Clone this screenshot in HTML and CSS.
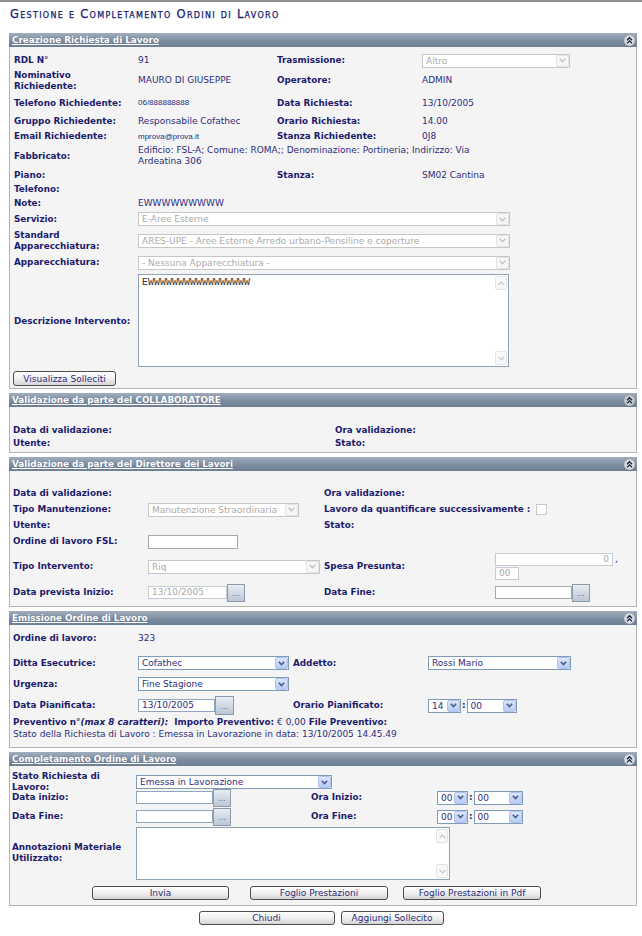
FILE: index.html
```html
<!DOCTYPE html>
<html lang="it">
<head>
<meta charset="utf-8">
<title>Gestione e Completamento Ordini di Lavoro</title>
<link rel="stylesheet" href="styles.css">
</head>
<body>
<div class="page">
  <h1 class="title">Gestione e Completamento Ordini di Lavoro</h1>

  <!-- 1 -->
  <section class="panel">
    <div class="bar"><a class="bar-title">Creazione Richiesta di Lavoro</a>
      <svg class="collapse" width="11" height="11" viewBox="0 0 11 11"><circle cx="5.5" cy="5.5" r="5.3" fill="#d7dde4"/><path d="M3 5.2 L5.5 2.7 L8 5.2 M3 8.4 L5.5 5.9 L8 8.4" fill="none" stroke="#1d2233" stroke-width="1.3"/></svg>
    </div>
    <div class="body b1">
      <div class="row h17"><span class="lbl">RDL N°</span><span class="val">91</span><span class="lbl">Trasmissione:</span>
        <div class="sel w148"><span class="txt">Altro</span><span class="arr"><svg width="7" height="5" viewBox="0 0 7 5"><path d="M0.6 0.8 L3.5 3.8 L6.4 0.8" fill="none" stroke="currentColor" stroke-width="1.3"/></svg></span></div></div>
      <div class="row h23"><span class="lbl">Nominativo<br>Richiedente:</span><span class="val">MAURO DI GIUSEPPE</span><span class="lbl">Operatore:</span><span class="val">ADMIN</span></div>
      <div class="row h22"><span class="lbl">Telefono Richiedente:</span><span class="val small up">06/888888888</span><span class="lbl">Data Richiesta:</span><span class="val">13/10/2005</span></div>
      <div class="row h14"><span class="lbl">Gruppo Richiedente:</span><span class="val">Responsabile Cofathec</span><span class="lbl">Orario Richiesta:</span><span class="val">14.00</span></div>
      <div class="row h17"><span class="lbl">Email Richiedente:</span><span class="val small">mprova@prova.it</span><span class="lbl">Stanza Richiedente:</span><span class="val">0J8</span></div>
      <div class="row h22"><span class="lbl">Fabbricato:</span><span class="val wrap span3">Edificio: FSL-A; Comune: ROMA;; Denominazione: Portineria; Indirizzo: Via<br>Ardeatina 306</span></div>
      <div class="row h16"><span class="lbl">Piano:</span><span></span><span class="lbl">Stanza:</span><span class="val">SM02 Cantina</span></div>
      <div class="row h13"><span class="lbl">Telefono:</span></div>
      <div class="row h15"><span class="lbl">Note:</span><span class="val">EWWWWWWWWW</span></div>
      <div class="row h16"><span class="lbl">Servizio:</span>
        <div class="sel w372 span3"><span class="txt">E-Aree Esterne</span><span class="arr"><svg width="7" height="5" viewBox="0 0 7 5"><path d="M0.6 0.8 L3.5 3.8 L6.4 0.8" fill="none" stroke="currentColor" stroke-width="1.3"/></svg></span></div></div>
      <div class="row h27"><span class="lbl">Standard<br>Apparecchiatura:</span>
        <div class="sel w372 span3"><span class="txt">ARES-UPE - Aree Esterne Arredo urbano-Pensiline e coperture</span><span class="arr"><svg width="7" height="5" viewBox="0 0 7 5"><path d="M0.6 0.8 L3.5 3.8 L6.4 0.8" fill="none" stroke="currentColor" stroke-width="1.3"/></svg></span></div></div>
      <div class="row h17"><span class="lbl">Apparecchiatura:</span>
        <div class="sel w372 span3"><span class="txt">- Nessuna Apparecchiatura -</span><span class="arr"><svg width="7" height="5" viewBox="0 0 7 5"><path d="M0.6 0.8 L3.5 3.8 L6.4 0.8" fill="none" stroke="currentColor" stroke-width="1.3"/></svg></span></div></div>
      <div class="row h96"><span class="lbl lbl-desc">Descrizione Intervento:</span>
        <div class="ta ta1 span3"><div class="ta-text">EWWWWWWWWWWWWWWWWW</div>
          <div class="sb"><span class="sb-btn"><svg width="7" height="5" viewBox="0 0 7 5"><path d="M0.6 4.2 L3.5 1.2 L6.4 4.2" fill="none" stroke="currentColor" stroke-width="1.2"/></svg></span><span class="sb-btn"><svg width="7" height="5" viewBox="0 0 7 5"><path d="M0.6 0.8 L3.5 3.8 L6.4 0.8" fill="none" stroke="currentColor" stroke-width="1.2"/></svg></span></div>
        </div></div>
      <div class="row h19"><button class="btn btn-sol">Visualizza Solleciti</button></div>
    </div>
  </section>

  <!-- 2 -->
  <section class="panel">
    <div class="bar"><a class="bar-title">Validazione da parte del COLLABORATORE</a>
      <svg class="collapse" width="11" height="11" viewBox="0 0 11 11"><circle cx="5.5" cy="5.5" r="5.3" fill="#c3cad3"/><path d="M3 5.2 L5.5 2.7 L8 5.2 M3 8.4 L5.5 5.9 L8 8.4" fill="none" stroke="#1d2233" stroke-width="1.3"/></svg>
    </div>
    <div class="body b2">
      <div class="row h13"><span class="lbl">Data di validazione:</span><span class="lbl">Ora validazione:</span></div>
      <div class="row h13"><span class="lbl">Utente:</span><span class="lbl">Stato:</span></div>
    </div>
  </section>

  <!-- 3 -->
  <section class="panel">
    <div class="bar"><a class="bar-title">Validazione da parte del Direttore dei Lavori</a>
      <svg class="collapse" width="11" height="11" viewBox="0 0 11 11"><circle cx="5.5" cy="5.5" r="5.3" fill="#d7dde4"/><path d="M3 5.2 L5.5 2.7 L8 5.2 M3 8.4 L5.5 5.9 L8 8.4" fill="none" stroke="#1d2233" stroke-width="1.3"/></svg>
    </div>
    <div class="body b3">
      <div class="row h14"><span class="lbl">Data di validazione:</span><span></span><span class="lbl">Ora validazione:</span></div>
      <div class="row h19"><span class="lbl">Tipo Manutenzione:</span>
        <div class="sel w151"><span class="txt">Manutenzione Straordinaria</span><span class="arr"><svg width="7" height="5" viewBox="0 0 7 5"><path d="M0.6 0.8 L3.5 3.8 L6.4 0.8" fill="none" stroke="currentColor" stroke-width="1.3"/></svg></span></div>
        <div class="grp span2"><span class="lbl">Lavoro da quantificare successivamente :</span><span class="chk"></span></div></div>
      <div class="row h13"><span class="lbl">Utente:</span><span></span><span class="lbl">Stato:</span></div>
      <div class="row h19"><span class="lbl">Ordine di lavoro FSL:</span><div class="inp w90 h14i"></div></div>
      <div class="row h31"><span class="lbl">Tipo Intervento:</span>
        <div class="sel w172"><span class="txt">Riq</span><span class="arr"><svg width="7" height="5" viewBox="0 0 7 5"><path d="M0.6 0.8 L3.5 3.8 L6.4 0.8" fill="none" stroke="currentColor" stroke-width="1.3"/></svg></span></div>
        <span class="lbl">Spesa Presunta:</span>
        <div class="spesa">
          <div class="grp"><div class="inp dis w118 right">0</div><span class="comma">,</span></div>
          <div class="inp dis w24 second">00</div>
        </div></div>
      <div class="row h21"><span class="lbl">Data prevista Inizio:</span>
        <div class="grp"><div class="inp dis w79">13/10/2005</div><span class="dots">...</span></div>
        <span class="lbl">Data Fine:</span>
        <div class="grp"><div class="inp w77"></div><span class="dots">...</span></div></div>
    </div>
  </section>

  <!-- 4 -->
  <section class="panel">
    <div class="bar"><a class="bar-title">Emissione Ordine di Lavoro</a>
      <svg class="collapse" width="11" height="11" viewBox="0 0 11 11"><circle cx="5.5" cy="5.5" r="5.3" fill="#d7dde4"/><path d="M3 5.2 L5.5 2.7 L8 5.2 M3 8.4 L5.5 5.9 L8 8.4" fill="none" stroke="#1d2233" stroke-width="1.3"/></svg>
    </div>
    <div class="body b4">
      <div class="row h13"><span class="lbl">Ordine di lavoro:</span><span class="val">323</span></div>
      <div class="row h16 mt10"><span class="lbl">Ditta Esecutrice:</span>
        <div class="sel on w151"><span class="txt">Cofathec</span><span class="arr"><svg width="7" height="5" viewBox="0 0 7 5"><path d="M0.8 0.8 L3.5 3.6 L6.2 0.8" fill="none" stroke="currentColor" stroke-width="1.6"/></svg></span></div>
        <span class="lbl">Addetto:</span>
        <div class="sel on w143"><span class="txt">Rossi Mario</span><span class="arr"><svg width="7" height="5" viewBox="0 0 7 5"><path d="M0.8 0.8 L3.5 3.6 L6.2 0.8" fill="none" stroke="currentColor" stroke-width="1.6"/></svg></span></div></div>
      <div class="row h16 mt5"><span class="lbl">Urgenza:</span>
        <div class="sel on w151"><span class="txt">Fine Stagione</span><span class="arr"><svg width="7" height="5" viewBox="0 0 7 5"><path d="M0.8 0.8 L3.5 3.6 L6.2 0.8" fill="none" stroke="currentColor" stroke-width="1.6"/></svg></span></div></div>
      <div class="row h19 mt4"><span class="lbl">Data Pianificata:</span>
        <div class="grp"><div class="inp on w77">13/10/2005</div><span class="dots dots19">...</span></div>
        <span class="lbl">Orario Pianificato:</span>
        <div class="grp">
          <div class="sel on w33"><span class="txt">14</span><span class="arr"><svg width="7" height="5" viewBox="0 0 7 5"><path d="M0.8 0.8 L3.5 3.6 L6.2 0.8" fill="none" stroke="currentColor" stroke-width="1.6"/></svg></span></div>
          <span class="colon">:</span>
          <div class="sel on w50"><span class="txt">00</span><span class="arr"><svg width="7" height="5" viewBox="0 0 7 5"><path d="M0.8 0.8 L3.5 3.6 L6.2 0.8" fill="none" stroke="currentColor" stroke-width="1.6"/></svg></span></div>
        </div></div>
      <div class="row h12 pv"><span class="lbl span-all">Preventivo n°<i>(max 8 caratteri):</i>&nbsp; Importo Preventivo: <span class="val">€ 0,00</span> File Preventivo:</span></div>
      <div class="row h12 pv"><span class="val span-all">Stato della Richiesta di Lavoro : Emessa in Lavorazione in data: 13/10/2005 14.45.49</span></div>
    </div>
  </section>

  <!-- 5 -->
  <section class="panel">
    <div class="bar"><a class="bar-title">Completamento Ordine di Lavoro</a>
      <svg class="collapse" width="11" height="11" viewBox="0 0 11 11"><circle cx="5.5" cy="5.5" r="5.3" fill="#d7dde4"/><path d="M3 5.2 L5.5 2.7 L8 5.2 M3 8.4 L5.5 5.9 L8 8.4" fill="none" stroke="#1d2233" stroke-width="1.3"/></svg>
    </div>
    <div class="body b5">
      <div class="row h17"><span class="lbl">Stato Richiesta di<br>Lavoro:</span>
        <div class="sel on w196 span3"><span class="txt">Emessa in Lavorazione</span><span class="arr"><svg width="7" height="5" viewBox="0 0 7 5"><path d="M0.8 0.8 L3.5 3.6 L6.2 0.8" fill="none" stroke="currentColor" stroke-width="1.6"/></svg></span></div></div>
      <div class="row h19"><span class="lbl">Data inizio:</span>
        <div class="grp"><div class="inp on w77"></div><span class="dots">...</span></div>
        <span class="lbl">Ora Inizio:</span>
        <div class="grp">
          <div class="sel on w31"><span class="txt">00</span><span class="arr"><svg width="7" height="5" viewBox="0 0 7 5"><path d="M0.8 0.8 L3.5 3.6 L6.2 0.8" fill="none" stroke="currentColor" stroke-width="1.6"/></svg></span></div>
          <span class="colon">:</span>
          <div class="sel on w49"><span class="txt">00</span><span class="arr"><svg width="7" height="5" viewBox="0 0 7 5"><path d="M0.8 0.8 L3.5 3.6 L6.2 0.8" fill="none" stroke="currentColor" stroke-width="1.6"/></svg></span></div>
        </div></div>
      <div class="row h19"><span class="lbl">Data Fine:</span>
        <div class="grp"><div class="inp on w77"></div><span class="dots">...</span></div>
        <span class="lbl">Ora Fine:</span>
        <div class="grp">
          <div class="sel on w31"><span class="txt">00</span><span class="arr"><svg width="7" height="5" viewBox="0 0 7 5"><path d="M0.8 0.8 L3.5 3.6 L6.2 0.8" fill="none" stroke="currentColor" stroke-width="1.6"/></svg></span></div>
          <span class="colon">:</span>
          <div class="sel on w49"><span class="txt">00</span><span class="arr"><svg width="7" height="5" viewBox="0 0 7 5"><path d="M0.8 0.8 L3.5 3.6 L6.2 0.8" fill="none" stroke="currentColor" stroke-width="1.6"/></svg></span></div>
        </div></div>
      <div class="row h54"><span class="lbl lbl-ann">Annotazioni Materiale<br>Utilizzato:</span>
        <div class="ta ta2 span3"><div class="ta-text"></div>
          <div class="sb"><span class="sb-btn"><svg width="7" height="5" viewBox="0 0 7 5"><path d="M0.6 4.2 L3.5 1.2 L6.4 4.2" fill="none" stroke="currentColor" stroke-width="1.2"/></svg></span><span class="sb-btn"><svg width="7" height="5" viewBox="0 0 7 5"><path d="M0.6 0.8 L3.5 3.8 L6.4 0.8" fill="none" stroke="currentColor" stroke-width="1.2"/></svg></span></div>
        </div></div>
      <div class="actions">
        <button class="btn w137">Invia</button>
        <button class="btn w138 ml21">Foglio Prestazioni</button>
        <button class="btn w138 ml15">Foglio Prestazioni in Pdf</button>
      </div>
    </div>
  </section>

  <div class="footer">
    <button class="btn w136">Chiudi</button>
    <button class="btn w103">Aggiungi Sollecito</button>
  </div>
</div>
</body>
</html>
```

FILE: styles.css
```css
* { box-sizing: border-box; }
html, body { margin: 0; padding: 0; background: #fff; }
body {
  font-family: "DejaVu Sans", Verdana, sans-serif;
  font-size: 9px;
  line-height: 11px;
  color: #2d2d7d;
}
.page {
  width: 642px;
  min-height: 936px;
  border-top: 2px solid #8f8f8f;
  padding: 0 5px 0 9px;
}
.title {
  margin: 0;
  height: 31px;
  padding: 7px 0 0 1px;
  font-size: 11.5px;
  line-height: 11px;
  font-weight: normal;
  font-variant: small-caps;
  letter-spacing: 1.3px;
  color: #15206e;
  -webkit-text-stroke: 0.25px #15206e;
}

/* panels */
.panel + .panel { margin-top: 4px; }
.bar {
  height: 14px;
  display: flex;
  align-items: center;
  justify-content: space-between;
  padding: 0 2px 0 3px;
  background: linear-gradient(#a1aebd, #7d8da1 55%, #6d7e92);
}
.bar-title {
  color: #fff;
  font-weight: bold;
  font-size: 8.8px;
  text-decoration: underline;
  text-shadow: 0 0 1px rgba(50, 60, 80, .5);
  white-space: nowrap;
}
.collapse { display: block; }
.body {
  background: #f4f4f4;
  border: 1px solid #b3b3b3;
  border-top: 0;
}

.row { display: grid; align-items: center; }
.b1 { padding: 5px 4px 2px 4px; }
.b1 .row { grid-template-columns: 124px 139px 145px 1fr; }
.b2 { padding: 17px 3px 2px 3px; }
.b2 .row { grid-template-columns: 322px 1fr; }
.b3 { padding: 15px 3px 3px 3px; }
.b3 .row { grid-template-columns: 135px 176px 171px 1fr; }
.b4 { padding: 7px 3px 8px 3px; }
.b4 .row { grid-template-columns: 125px 155px 135px 1fr; }
.b4 .pv { position: relative; top: 1px; }
.b5 { padding: 5px 2px 5px 2px; }
.b5 .row { grid-template-columns: 124px 175px 126px 1fr; }

.h12 { height: 12px; }
.h13 { height: 13px; }
.h14 { height: 14px; }
.h15 { height: 15px; }
.h16 { height: 16px; }
.h17 { height: 17px; }
.h19 { height: 19px; }
.h21 { height: 21px; }
.h22 { height: 22px; }
.h23 { height: 23px; }
.h27 { height: 27px; }
.h31 { height: 31px; }
.h54 { height: 54px; }
.h96 { height: 96px; }
.mt4 { margin-top: 4px; }
.mt5 { margin-top: 5px; }
.mt10 { margin-top: 10px; }

.span2 { grid-column: 3 / 5; }
.span3 { grid-column: 2 / 5; }
.span-all { grid-column: 1 / -1; }

.lbl {
  font-weight: bold;
  font-size: 8.8px;
  color: #1c1c6c;
  white-space: nowrap;
}
.lbl i { font-style: italic; }
.lbl .val { font-weight: normal; font-size: 9px; }
.val { color: #2d2d7d; white-space: nowrap; }
.val.wrap { white-space: normal; }
.small {
  font-family: "Liberation Sans", Arial, sans-serif;
  font-size: 8px;
}
.up { position: relative; top: -1px; }
.lbl-desc { padding-top: 4px; }

/* selects */
.sel {
  display: flex;
  height: 14px;
  background: #fff;
  border: 1px solid #c7c7c7;
  justify-self: start;
}
.sel .txt {
  flex: 1;
  padding-left: 3px;
  line-height: 12px;
  white-space: nowrap;
  overflow: hidden;
  color: #ababab;
}
.sel .arr {
  width: 13px;
  margin: 0;
  display: flex;
  align-items: center;
  justify-content: center;
  border: 1px solid #e3e3e3;
  border-radius: 2px;
  background: #f6f6f6;
  color: #c2c2c2;
}
.sel.on { border-color: #7f9db9; }
.sel.on .txt { color: #2d2d7d; }
.sel.on .arr {
  background: linear-gradient(#dbe5fb, #b9cbf3);
  border-color: #b1c3ec;
  color: #4a5d8a;
}
.w31 { width: 31px; }
.w33 { width: 33px; }
.w49 { width: 49px; }
.w50 { width: 50px; }
.w143 { width: 143px; }
.w148 { width: 148px; }
.w151 { width: 151px; }
.w172 { width: 172px; }
.w196 { width: 196px; }
.w372 { width: 372px; }
.w24 { width: 24px; }
.w77 { width: 77px; }
.w79 { width: 79px; }
.w90 { width: 90px; }
.w118 { width: 118px; }
.w103 { width: 103px; }
.w136 { width: 136px; }
.w137 { width: 137px; }
.w138 { width: 138px; }

/* inputs */
.grp { display: flex; align-items: center; }
.inp {
  height: 13px;
  border: 1px solid #a4aab3;
  background: #fff;
  padding: 0 3px;
  line-height: 11px;
  color: #2d2d7d;
  white-space: nowrap;
}
.inp.h14i { height: 14px; }
.inp.dis { border-color: #c6ccd3; color: #a9a9a9; }
.inp.on { border-color: #8ea6bd; }
.inp.right { text-align: right; }
.spesa { display: flex; flex-direction: column; }
.spesa .second { margin-top: 1px; }
.comma { margin-left: 2px; color: #2d2d7d; }
.colon { margin: 0 1px; color: #2d2d7d; font-weight: bold; }
.chk {
  width: 11px;
  height: 11px;
  border: 1px solid #cacaca;
  background: #fff;
  margin-left: 6px;
}
.dots {
  width: 18px;
  height: 18px;
  border: 1px solid #8c9aae;
  background: linear-gradient(#e7ecf2, #bcc7d5);
  color: #5a6c9a;
  font-size: 8px;
  line-height: 8px;
  display: flex;
  align-items: flex-end;
  justify-content: center;
  padding-bottom: 3px;
}
.dots19 { width: 19px; height: 19px; }

/* textareas */
.ta {
  display: flex;
  background: #fff;
  border: 1px solid #8fa2b5;
  justify-self: start;
  align-self: end;
}
.ta1 { width: 371px; height: 93px; }
.ta2 { width: 314px; height: 53px; }
.ta-text {
  flex: 1;
  padding: 2px 3px;
  font-family: "Liberation Mono", "Courier New", monospace;
  font-size: 10px;
  line-height: 12px;
  color: #333;
}
.sb {
  width: 14px;
  display: flex;
  flex-direction: column;
  justify-content: space-between;
  padding: 1px;
}
.sb-btn {
  height: 14px;
  display: flex;
  align-items: center;
  justify-content: center;
  border: 1px solid #e2e4e7;
  border-radius: 2px;
  background: #f7f8f9;
  color: #c3c6ca;
}

/* buttons */
.btn {
  height: 14px;
  padding: 0;
  font-family: "DejaVu Sans", Verdana, sans-serif;
  font-size: 9px;
  line-height: 12px;
  color: #2a2a7a;
  border: 1px solid #4d4d4d;
  border-radius: 3px;
  background: linear-gradient(#ffffff, #eeeeee 55%, #d4d4d4);
}
.btn-sol { width: 103px; margin-left: -1px; align-self: end; justify-self: start; height: 15px; }
.actions {
  display: flex;
  margin-top: 6px;
  padding-left: 80px;
  height: 14px;
}
.ml21 { margin-left: 21px; }
.ml15 { margin-left: 15px; }
.footer {
  display: flex;
  justify-content: center;
  gap: 6px;
  margin-top: 5px;
  padding-right: 4px;
}
```
